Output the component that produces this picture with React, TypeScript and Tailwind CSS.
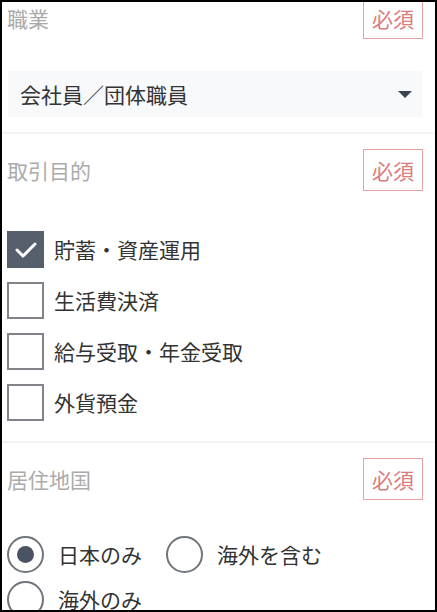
import React from "react";

const Badge = () => (
  <span className="flex h-[42px] w-[60px] items-center justify-center border border-[#e4a3a3] text-[21px] leading-none text-[#d97d7d]">
    必須
  </span>
);

const SectionHeader = ({ label }: { label: string }) => (
  <div className="flex h-[42px] items-center justify-between pl-[5px] pr-[12px]">
    <span className="text-[21px] leading-none text-[#ababab]">{label}</span>
    <Badge />
  </div>
);

const Divider = () => <div className="h-[2px] bg-[#f2f4f4]" />;

const Checkbox = ({ label, checked }: { label: string; checked?: boolean }) => (
  <div className="flex items-center gap-[10px]">
    {checked ? (
      <span className="flex h-[37px] w-[37px] items-center justify-center bg-[#565f6c]">
        <svg width="22" height="16" viewBox="0 0 22 16" fill="none">
          <polyline points="2,8 8,14 20,2" stroke="white" strokeWidth="3" strokeLinecap="round" strokeLinejoin="round" />
        </svg>
      </span>
    ) : (
      <span className="h-[37px] w-[37px] border-2 border-[#80848a] bg-white" />
    )}
    <span className="text-[21px] leading-none text-[#333]">{label}</span>
  </div>
);

const Radio = ({ label, checked }: { label: string; checked?: boolean }) => (
  <div className="flex items-center gap-[14px]">
    <span className="flex h-[37px] w-[37px] items-center justify-center rounded-full border-2 border-[#70757c]">
      {checked && <span className="h-[17px] w-[17px] rounded-full bg-[#4a5361]" />}
    </span>
    <span className="text-[21px] leading-none text-[#333]">{label}</span>
  </div>
);

const purposes = ["貯蓄・資産運用", "生活費決済", "給与受取・年金受取", "外貨預金"];

export default function App() {
  return (
    <div
      className="h-[612px] w-[437px] overflow-hidden border-2 border-black bg-white"
      style={{ fontFamily: '"Noto Sans CJK JP", "Noto Sans", sans-serif' }}
    >
      <div className="-mt-[5px]">
        <SectionHeader label="職業" />
        <div className="ml-[6px] mr-[13px] mt-[32px] flex h-[46px] items-center justify-between bg-[#f7f9fb] pl-[12px] pr-[10px]">
          <span className="text-[21px] leading-none text-[#333]">会社員／団体職員</span>
          <svg width="14" height="7" viewBox="0 0 14 7">
            <polygon points="0,0 14,0 7,7" fill="#3b4350" />
          </svg>
        </div>
        <div className="mt-[15px]">
          <Divider />
        </div>

        <div className="mt-[15px]">
          <SectionHeader label="取引目的" />
        </div>
        <div className="mt-[40px] flex flex-col gap-[14px] pl-[5px]">
          {purposes.map((p, i) => (
            <Checkbox key={p} label={p} checked={i === 0} />
          ))}
        </div>
        <div className="mt-[20px]">
          <Divider />
        </div>

        <div className="mt-[15px]">
          <SectionHeader label="居住地国" />
        </div>
        <div className="mt-[36px] flex flex-col gap-[8px] pl-[5px]">
          <div className="flex items-center gap-[24px]">
            <Radio label="日本のみ" checked />
            <Radio label="海外を含む" />
          </div>
          <Radio label="海外のみ" />
        </div>
      </div>
    </div>
  );
}
